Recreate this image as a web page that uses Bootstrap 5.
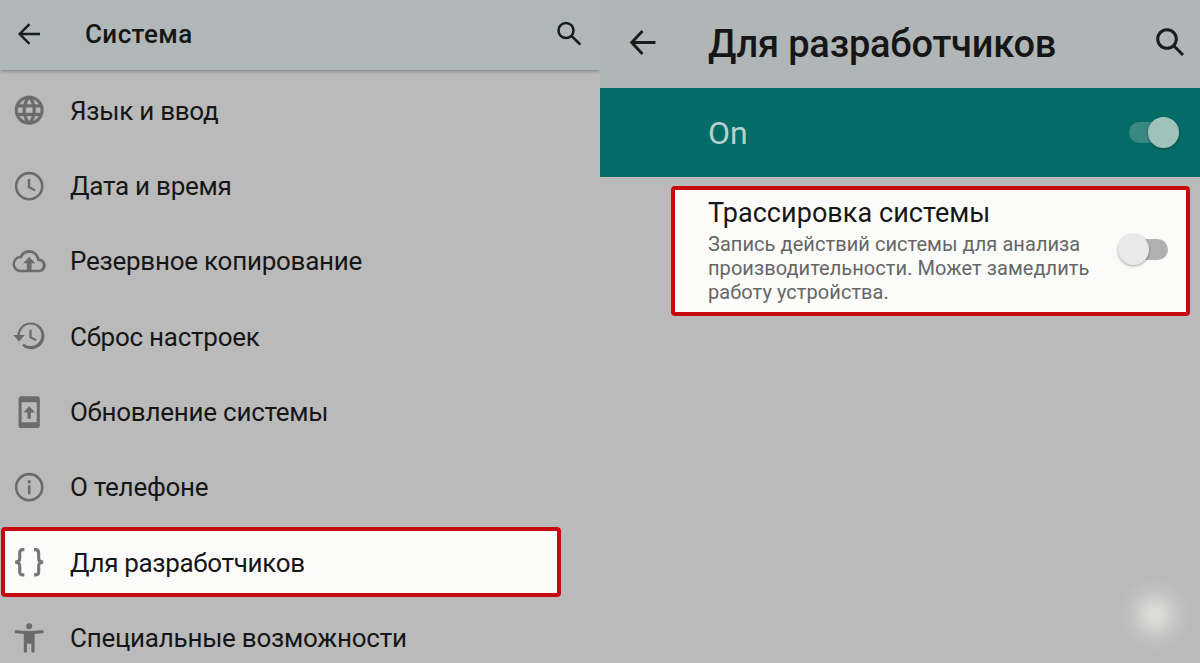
<!DOCTYPE html>
<html lang="ru">
<head>
<meta charset="utf-8">
<meta name="viewport" content="width=device-width, initial-scale=1">
<title>Система</title>
<link href="https://cdn.jsdelivr.net/npm/bootstrap@5.3.0/dist/css/bootstrap.min.css" rel="stylesheet">
<style>
body{font-family:Roboto,"Noto Sans",sans-serif;background:#bababa;color:#161616;line-height:1.2}
.screens{height:663px}
.pane{width:600px}
.bar-l{height:70px;background:#b0b7b8;padding:0 18px 2px 17px;box-shadow:0 1px 4px rgba(60,60,60,.5);flex:none}
.bar-r{height:88px;background:#b0b6b8;padding:0 14px 4px 29px;flex:none}
.ttl-l{font-size:26px;font-weight:500;margin-left:44px;letter-spacing:.4px;padding-top:2px}
.ttl-r{font-size:38px;font-weight:500;margin-left:52px;letter-spacing:-.2px;padding-top:5px}
.menu{padding-top:3px}
.entry{height:75.3px;flex:none;padding-left:12px;font-size:26px;letter-spacing:-.25px;white-space:nowrap}
.entry span{padding-top:1.600px}
.entry svg{width:34.4px;height:34.4px;fill:#6b6b6b;flex:none;margin-right:23.6px}
.marked{width:560px;height:70px;margin:2.600px 0 2.700px 1px;padding-left:7px;letter-spacing:-.32px;border:4px solid #c60a10;border-radius:4px;background:#fbfcfa}
.master{height:89px;background:#046c66;padding:0 21px 0 108px;color:#b6d0cd;font-size:32px;flex:none}
.master span{padding-top:2px}
.toggle{width:50px;height:31px}
.track{height:21px;border-radius:11px}
.knob{width:31px;height:31px;box-shadow:0 1px 3px rgba(0,0,0,.35)}
.trace{width:519px;height:130px;margin:9px 0 0 71px;padding:0 18px 0 33px;border:4px solid #c60a10;border-radius:4px;background:#fbfcfa}
.trace-t{font-size:27px;line-height:32px;margin-top:7px;letter-spacing:.05px}
.trace-d{font-size:20px;letter-spacing:.06px;line-height:23.7px;color:#666;margin-top:4.400px;white-space:nowrap}
.trace .toggle{margin:-4px 0 0}
.glow{width:76px;height:76px;left:1117px;top:577px;background:radial-gradient(circle closest-side,#dcdcda 0,#dadad8 18%,#cdcdcc 42%,#c0c0c0 68%,rgba(186,186,186,0) 100%)}
</style>
</head>
<body>
<main class="screens d-flex position-relative overflow-hidden">
  <section class="pane d-flex flex-column overflow-hidden">
    <header class="bar-l d-flex align-items-center position-relative">
      <svg width="24" height="24" viewBox="0 0 24 24" fill="none" stroke="#1b1b1b" stroke-width="2.4"><path d="M23 12H3M12.500 2.200 2.700 12l9.800 9.800"/></svg>
      <span class="ttl-l">Система</span>
      <svg class="ms-auto" width="26" height="26" viewBox="0 0 26 26" fill="none" stroke="#1b1b1b" stroke-width="2.5"><circle cx="10" cy="9.500" r="7.500"/><path d="m15.500 15 8.800 8.500"/></svg>
    </header>
    <nav class="menu d-flex flex-column">
      <div class="entry d-flex align-items-center"><svg viewBox="0 0 24 24" stroke="#6b6b6b" stroke-width=".25"><path d="M11.99 2C6.47 2 2 6.48 2 12s4.47 10 9.99 10C17.52 22 22 17.52 22 12S17.52 2 11.99 2zm6.93 6h-2.95c-.32-1.25-.78-2.45-1.38-3.56 1.84.63 3.37 1.91 4.33 3.56zM12 4.04c.83 1.2 1.48 2.53 1.91 3.96h-3.82c.43-1.43 1.08-2.76 1.91-3.96zM4.26 14C4.1 13.36 4 12.69 4 12s.1-1.36.26-2h3.38c-.08.66-.14 1.32-.14 2s.06 1.34.14 2H4.26zm.82 2h2.95c.32 1.25.78 2.45 1.38 3.56-1.84-.63-3.37-1.9-4.33-3.56zm2.95-8H5.08c.96-1.66 2.49-2.93 4.33-3.56C8.81 5.55 8.35 6.75 8.03 8zM12 19.96c-.83-1.2-1.48-2.53-1.91-3.96h3.82c-.43 1.43-1.08 2.76-1.91 3.96zM14.34 14H9.66c-.09-.66-.16-1.32-.16-2s.07-1.35.16-2h4.68c.09.65.16 1.32.16 2s-.07 1.34-.16 2zm.25 5.56c.6-1.11 1.06-2.31 1.38-3.56h2.95c-.96 1.65-2.49 2.93-4.33 3.56zM16.36 14c.08-.66.14-1.32.14-2s-.06-1.34-.14-2h3.38c.16.64.26 1.31.26 2s-.1 1.36-.26 2h-3.38z"/></svg><span>Язык и ввод</span></div>
      <div class="entry d-flex align-items-center"><svg viewBox="0 0 24 24"><path d="M12 2a10 10 0 1 0 0 20 10 10 0 0 0 0-20zm0 18.200a8.200 8.200 0 1 1 0-16.400 8.200 8.200 0 0 1 0 16.400zM12.700 7h-1.700v6l4.700 2.600.8-1.300-3.800-2.100z"/></svg><span>Дата и время</span></div>
      <div class="entry d-flex align-items-center"><svg viewBox="-.4 0 24.800 24"><path d="M19.350 10.040A7.490 7.490 0 0 0 12 4C9.110 4 6.600 5.640 5.350 8.040A5.994 5.994 0 0 0 0 14c0 3.310 2.690 6 6 6h13c2.760 0 5-2.240 5-5 0-2.640-2.050-4.780-4.650-4.960zM19 18.100H6A4.100 4.100 0 0 1 5.600 9.900l1.100-.1.500-1A5.600 5.600 0 0 1 17.500 10.400l.3 1.500 1.500.1A3.100 3.100 0 0 1 19 18.100zM7.600 13.500h2.700V18.500h3.400v-5H16.400L12 8.800z"/></svg><span>Резервное копирование</span></div>
      <div class="entry d-flex align-items-center"><svg viewBox="0 0 24 24"><path d="M13 2.500a9.300 9.300 0 0 0-9.300 8.700H.900L4.900 15.700 9 11.200H5.500A7.500 7.500 0 1 1 8.300 17.200L6.900 18.500A9.300 9.300 0 1 0 13 2.500zm-.9 5v5.500l4.400 2.600.8-1.300-3.600-2.100V7.500z"/></svg><span>Сброс настроек</span></div>
      <div class="entry d-flex align-items-center"><svg viewBox="0 0 24 24"><path fill-rule="evenodd" d="M6.500.9h11A1.900 1.900 0 0 1 19.400 2.800v18.400a1.900 1.900 0 0 1-1.900 1.900h-11a1.900 1.900 0 0 1-1.900-1.900V2.800A1.900 1.900 0 0 1 6.500.9zM6.700 5v14h10.600V5zM12 7.800l-4.100 4.400h2.900v4.300h2.400v-4.300h2.900z"/></svg><span>Обновление системы</span></div>
      <div class="entry d-flex align-items-center"><svg viewBox="0 0 24 24"><path d="M12 2a10 10 0 1 0 0 20 10 10 0 0 0 0-20zm0 18.200a8.200 8.200 0 1 1 0-16.400 8.200 8.200 0 0 1 0 16.400zM11.100 10.700h1.800v6.300h-1.800zM11 7.200h2v2h-2z"/></svg><span>О телефоне</span></div>
      <div class="entry marked d-flex align-items-center"><svg viewBox="0 0 24 24"><path fill="none" stroke="#777" stroke-width="2.200" d="M8.600 3.200H7.600Q5.400 3.200 5.400 5.400v3.900Q5.400 11.900 2.200 12q3.200.1 3.200 2.700v3.900q0 2.200 2.200 2.200h1M15.400 3.200h1q2.200 0 2.200 2.200v3.900q0 2.600 3.200 2.700-3.200.1-3.200 2.700v3.900q0 2.200-2.200 2.200h-1"/></svg><span>Для разработчиков</span></div>
      <div class="entry d-flex align-items-center"><svg viewBox="0 0 24 24"><circle cx="12" cy="3.700" r="2.100"/><path d="M3 6.500Q12 7.500 21 6.500a1 1 0 0 1 .3 2L15.800 9.100V21a1 1 0 0 1-2.300 0V15.800h-3V21a1 1 0 0 1-2.300 0V9.100L2.700 8.500a1 1 0 0 1 .3-2z"/></svg><span>Специальные возможности</span></div>
    </nav>
  </section>
  <section class="pane d-flex flex-column">
    <header class="bar-r d-flex align-items-center">
      <svg width="27" height="27" viewBox="0 0 27 27" fill="none" stroke="#1b1b1b" stroke-width="2.900"><path d="M26.500 13.500H3M13.500 2 2.700 13.500 13.500 25"/></svg>
      <span class="ttl-r">Для разработчиков</span>
      <svg class="ms-auto" width="31" height="31" viewBox="0 0 31 31" fill="none" stroke="#1b1b1b" stroke-width="3"><circle cx="12" cy="12" r="9.300"/><path d="m18.500 18.500 9.500 9.500"/></svg>
    </header>
    <div class="master d-flex align-items-center justify-content-between">
      <span>On</span>
      <div class="toggle position-relative d-flex align-items-center"><div class="track flex-fill" style="background:#398881"></div><div class="knob rounded-circle position-absolute end-0" style="background:#9fc3ba"></div></div>
    </div>
    <article class="trace d-flex justify-content-between">
      <div><div class="trace-t">Трассировка системы</div><div class="trace-d">Запись действий системы для анализа<br>производительности. Может замедлить<br>работу устройства.</div></div>
      <div class="toggle position-relative d-flex align-items-center align-self-center"><div class="track flex-fill" style="background:#b0b0b0"></div><div class="knob rounded-circle position-absolute start-0" style="background:#e9e9e9"></div></div>
    </article>
  </section>
  <div class="glow position-absolute rounded-circle"></div>
</main>
<script src="https://cdn.jsdelivr.net/npm/bootstrap@5.3.0/dist/js/bootstrap.bundle.min.js"></script>
</body>
</html>
